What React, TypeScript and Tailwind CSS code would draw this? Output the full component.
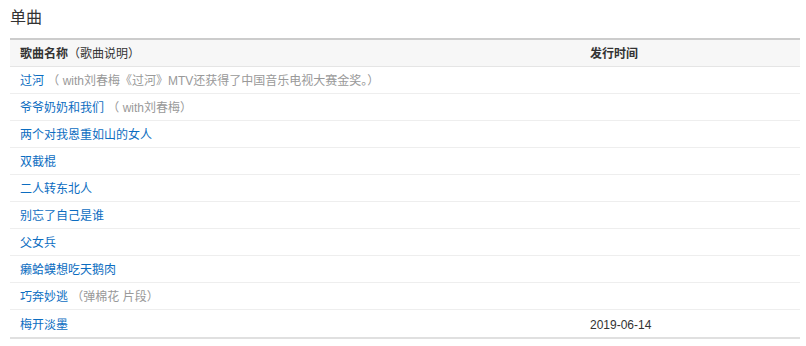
import React from "react";

const rows: { name: string; note?: string; date?: string }[] = [
  { name: "过河", note: "（ with刘春梅《过河》MTV还获得了中国音乐电视大赛金奖。）" },
  { name: "爷爷奶奶和我们", note: "（ with刘春梅）" },
  { name: "两个对我恩重如山的女人" },
  { name: "双截棍" },
  { name: "二人转东北人" },
  { name: "别忘了自己是谁" },
  { name: "父女兵" },
  { name: "癞蛤蟆想吃天鹅肉" },
  { name: "巧奔妙逃", note: "（弹棉花 片段）" },
  { name: "梅开淡墨", date: "2019-06-14" },
];

export default function App() {
  return (
    <div
      className="w-[806px] h-[346px] bg-white px-[10px] pt-[7px]"
      style={{ fontFamily: '"Liberation Sans", Arial, "Noto Sans CJK SC", sans-serif' }}
    >
      <h2 className="text-[16px] leading-[22px] text-[#333] h-[31px]">单曲</h2>
      <div className="w-[790px] border-t-2 border-[#cccccc] border-b-2 border-b-[#e0e0e0]">
        <div className="flex h-[27px] pt-[2px] items-center bg-[#f7f7f7] border-b border-[#e5e5e5] text-[12px] text-[#333]">
          <div className="w-[570px] pl-[10px]">
            <span className="font-bold">歌曲名称</span>
            <span>（歌曲说明）</span>
          </div>
          <div className="pl-[10px] font-bold">发行时间</div>
        </div>
        {rows.map((r, i) => (
          <div
            key={i}
            className={
              "flex h-[27px] pt-[2px] items-center text-[12px] " +
              (i < rows.length - 1 ? "border-b border-[#eeeeee]" : "")
            }
          >
            <div className="w-[570px] pl-[10px] whitespace-nowrap">
              <span className="text-[#0c6dc1]">{r.name}</span>
              {r.note && <span className="text-[#999]"> {r.note}</span>}
            </div>
            <div className="pl-[10px] text-[#333]">{r.date ?? ""}</div>
          </div>
        ))}
      </div>
    </div>
  );
}
